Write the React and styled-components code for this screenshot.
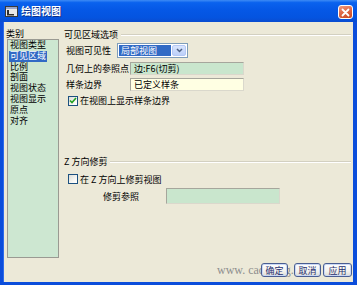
import styled, { createGlobalStyle } from "styled-components";

const GlobalStyle = createGlobalStyle`
  html, body {
    margin: 0;
    padding: 0;
    background: #ffffff;
  }
  body {
    font-family: "Noto Sans CJK SC", "Liberation Sans", sans-serif;
    font-size: 9px;
    color: #000;
  }
  * { box-sizing: border-box; }
`;

const Window = styled.div`
  width: 357px;
  height: 285px;
  display: flex;
  flex-direction: column;
  background: #0B4DDB;
  overflow: hidden;
`;

const TitleBar = styled.div`
  height: 22px;
  display: flex;
  align-items: center;
  padding: 0 3px 0 5px;
  background: linear-gradient(180deg, #3D8BF5 0%, #0A62EE 12%, #0558E6 45%, #0454E0 80%, #0A4CD0 100%);
`;

const TitleText = styled.span`
  margin-left: 3px;
  color: #fff;
  font-size: 10px;
  font-weight: 700;
  line-height: 12px;
  text-shadow: 1px 1px 0 #0A2F8A;
  flex: 1;
`;

const CloseButton = styled.div`
  width: 15px;
  height: 14px;
  margin-top: 2px;
  margin-right: 1px;
  border: 1px solid #fff;
  border-radius: 3px;
  background: linear-gradient(160deg, #F09A7E 0%, #E06A48 45%, #C9471F 100%);
  display: flex;
  align-items: center;
  justify-content: center;
`;

const Body = styled.div`
  flex: 1;
  margin: 0 4px 3px 3px;
  background: #ECE9D8;
  display: flex;
  flex-direction: column;
  border-left: 1px solid #2E6BEB;
`;

const Content = styled.div`
  flex: 1;
  display: flex;
`;

const Sidebar = styled.div`
  width: 57px;
  padding: 6px 0 0 2px;
  display: flex;
  flex-direction: column;
`;

const SideLabel = styled.div`
  line-height: 11px;
  height: 11px;
`;

const List = styled.div`
  margin-left: 1px;
  width: 52px;
  height: 219px;
  background: #CDE7D1;
  border: 1px solid #9A9A92;
  padding: 0 0 0 1px;
`;

const ListItem = styled.div`
  line-height: 10.8px;
  height: 10.8px;
`;

const ItemText = styled.span`
  display: inline-block;
  line-height: 10.8px;
  padding: 0 1px;
  background: ${(p) => (p.$active ? "#316AC5" : "transparent")};
  color: ${(p) => (p.$active ? "#fff" : "#000")};
`;

const Main = styled.div`
  flex: 1;
  padding: 7px 2px 0 3px;
  display: flex;
  flex-direction: column;
`;

const GroupHeader = styled.div`
  display: flex;
  align-items: center;
  gap: 3px;
  height: 11px;
  line-height: 11px;
  margin-top: ${(p) => p.$top || 0}px;
`;

const GroupLine = styled.div`
  flex: 1;
  height: 2px;
  border-top: 1px solid #D3D0C1;
  border-bottom: 1px solid #fff;
`;

const Row = styled.div`
  display: flex;
  align-items: center;
  padding-left: ${(p) => p.$indent || 2}px;
  margin-top: ${(p) => p.$top || 0}px;
  height: ${(p) => p.$h || 13}px;
`;

const Label = styled.div`
  width: ${(p) => p.$w}px;
  line-height: 11px;
  white-space: nowrap;
`;

const Combo = styled.div`
  width: 71px;
  height: 15px;
  border: 1px solid #7F9DB9;
  background: #fff;
  display: flex;
  padding: 1px;
`;

const ComboValue = styled.div`
  flex: 1;
  background: #316AC5;
  color: #fff;
  line-height: 11px;
  padding-left: 2px;
`;

const ComboArrow = styled.div`
  width: 14px;
  margin-left: 1px;
  background: linear-gradient(180deg, #D9E5FD 0%, #BCCFF8 100%);
  border: 1px solid #B4C8F6;
  border-radius: 2px;
  display: flex;
  align-items: center;
  justify-content: center;
`;

const Field = styled.div`
  width: ${(p) => p.$w || 114}px;
  height: ${(p) => p.$h || 13}px;
  background: ${(p) => (p.$yellow ? "#FFFFE3" : "#C9E6CD")};
  border: 1px solid #A6A69C;
  border-right-color: #DAD8CC;
  border-bottom-color: #DAD8CC;
  line-height: 11px;
  padding-left: 3px;
  white-space: nowrap;
  overflow: hidden;
`;

const Check = styled.div`
  width: 10px;
  height: 10px;
  margin-left: 2px;
  margin-right: 2px;
  border: 1px solid #1C5180;
  background: linear-gradient(135deg, #DCDCD6 0%, #F6F6F2 60%, #fff 100%);
  display: flex;
  align-items: center;
  justify-content: center;
`;

const CheckText = styled.span`
  line-height: 11px;
  white-space: nowrap;
`;

const Footer = styled.div`
  height: 22px;
  display: flex;
  justify-content: flex-end;
  align-items: flex-start;
  padding: 3px 1px 0 0;
  position: relative;
`;

const Watermark = styled.div`
  position: absolute;
  left: 213px;
  top: 4px;
  font-family: "Liberation Serif", serif;
  font-size: 12px;
  line-height: 13px;
  color: #8E8E8E;
  white-space: nowrap;
`;

const Button = styled.div`
  position: relative;
  z-index: 1;
  width: ${(p) => p.$w || 27}px;
  margin-left: ${(p) => p.$gap || 0}px;
  height: 14px;
  border: 1px solid #4A5E91;
  border-radius: 3px;
  background: linear-gradient(180deg, #FFFFFF 0%, #F3F2EE 60%, #DEDCD2 100%);
  color: #1F2F70;
  display: flex;
  align-items: center;
  justify-content: center;
  line-height: 11px;
  box-shadow: inset 0 0 0 1px #C9D8F6;
`;

const items = ["视图类型", "可见区域", "比例", "剖面", "视图状态", "视图显示", "原点", "对齐"];

export default function App() {
  return (
    <>
      <GlobalStyle />
      <Window>
        <TitleBar>
          <svg width="13" height="11" viewBox="0 0 13 11">
            <rect x="0.5" y="0.5" width="12" height="10" fill="#E9E9E9" stroke="#3A3A3A" />
            <rect x="1" y="1" width="11" height="2" fill="#9AA6C8" />
            <path d="M2 4 H4 V8 H9 V9.5 H2 Z" fill="#2F2F2F" />
          </svg>
          <TitleText>绘图视图</TitleText>
          <CloseButton>
            <svg width="9" height="9" viewBox="0 0 9 9">
              <path d="M1.5 1.5 L7.5 7.5 M7.5 1.5 L1.5 7.5" stroke="#fff" strokeWidth="1.8" strokeLinecap="round" />
            </svg>
          </CloseButton>
        </TitleBar>
        <Body>
          <Content>
            <Sidebar>
              <SideLabel>类别</SideLabel>
              <List>
                {items.map((it) => (
                  <ListItem key={it}>
                    <ItemText $active={it === "可见区域"}>{it}</ItemText>
                  </ListItem>
                ))}
              </List>
            </Sidebar>
            <Main>
              <GroupHeader>
                <span>可见区域选项</span>
                <GroupLine />
              </GroupHeader>
              <Row $top={3} $h={15}>
                <Label $w={51}>视图可见性</Label>
                <Combo>
                  <ComboValue>局部视图</ComboValue>
                  <ComboArrow>
                    <svg width="7" height="5" viewBox="0 0 7 5">
                      <path d="M1 1 L3.5 3.5 L6 1" fill="none" stroke="#4D6185" strokeWidth="1.5" />
                    </svg>
                  </ComboArrow>
                </Combo>
              </Row>
              <Row $top={4}>
                <Label $w={64}>几何上的参照点</Label>
                <Field>边:F6(切剪)</Field>
              </Row>
              <Row $top={3}>
                <Label $w={64}>样条边界</Label>
                <Field $yellow>已定义样条</Field>
              </Row>
              <Row $top={4} $h={11}>
                <Check>
                  <svg width="8" height="7" viewBox="0 0 8 7">
                    <path d="M1 3.5 L3 5.5 L7 1" fill="none" stroke="#21A121" strokeWidth="1.6" />
                  </svg>
                </Check>
                <CheckText>在视图上显示样条边界</CheckText>
              </Row>
              <GroupHeader $top={50}>
                <span>Z 方向修剪</span>
                <GroupLine />
              </GroupHeader>
              <Row $top={7} $h={10}>
                <Check />
                <CheckText>在 Z 方向上修剪视图</CheckText>
              </Row>
              <Row $top={4} $h={16} $indent={39}>
                <Label $w={63}>修剪参照</Label>
                <Field $h={16} />
              </Row>
            </Main>
          </Content>
          <Footer>
            <Watermark>www. cadcamg. com</Watermark>
            <Button>确定</Button>
            <Button $gap={6}>取消</Button>
            <Button $w={29} $gap={2}>应用</Button>
          </Footer>
        </Body>
      </Window>
    </>
  );
}
